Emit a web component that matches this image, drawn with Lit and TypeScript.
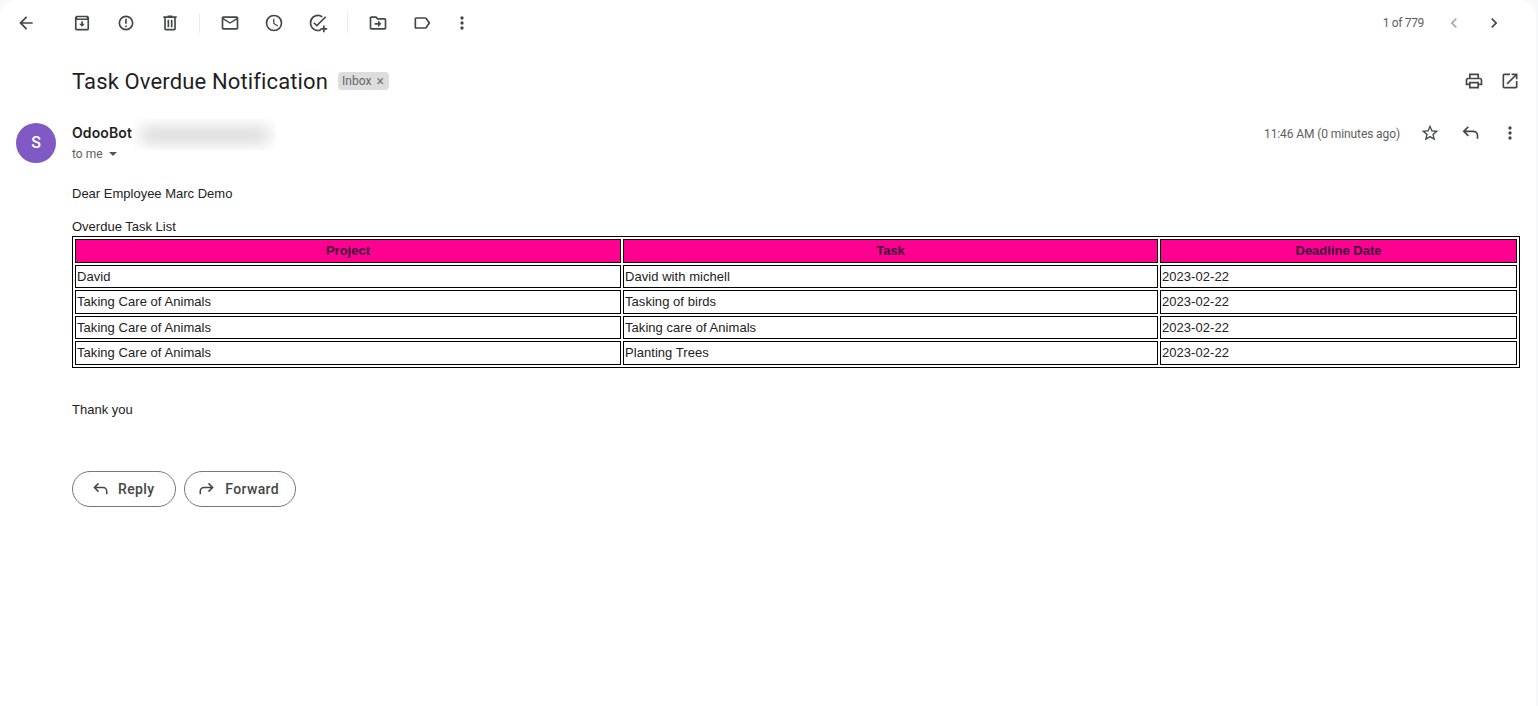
import { LitElement, html, css } from "lit";
import { customElement } from "lit/decorators.js";

const P: Record<string, string> = {
  back: "M20 11H7.83l5.59-5.59L12 4l-8 8 8 8 1.41-1.41L7.83 13H20v-2z",
  archive: "M5 3.2H19L20.5 5.5V19a2 2 0 0 1-2 2h-13a2 2 0 0 1-2-2V5.5ZM5.5 8.5V19h13V8.5H5.5zM6 6.7h12l-.7-1.5H6.7L6 6.7zM11 10h2v3h2.5L12 16.5 8.5 13H11v-3z",
  spam: "M12 3a9 9 0 1 0 0 18 9 9 0 0 0 0-18zm0 16a7 7 0 1 1 0-14 7 7 0 0 1 0 14zM11 7h2v6h-2V7zm0 8h2v2h-2v-2z",
  trash: "M15 4V3H9v1H4v2h1v13c0 1.1.9 2 2 2h10c1.1 0 2-.9 2-2V6h1V4h-5zm2 15H7V6h10v13zM9 8h2v9H9V8zm4 0h2v9h-2V8z",
  mail: "M20 4H4c-1.1 0-2 .9-2 2v12c0 1.1.9 2 2 2h16c1.1 0 2-.9 2-2V6c0-1.1-.9-2-2-2zm0 14H4V8l8 5 8-5v10zm-8-7L4 6h16l-8 5z",
  clock: "M12 2a10 10 0 1 0 0 20 10 10 0 0 0 0-20zm0 18a8 8 0 1 1 0-16 8 8 0 0 1 0 16zm.5-13H11v6l5.2 3.2.8-1.3-4.5-2.7V7z",
  task: "M22 5.18 10.59 16.6l-4.24-4.24 1.41-1.41 2.83 2.83 10-10L22 5.18zM12 20a8 8 0 0 1 0-16c1.57 0 3.04.46 4.28 1.25l1.45-1.45A10 10 0 0 0 2 12a10 10 0 0 0 13.5 9.36v-2.14c-1.1.5-2.28.78-3.5.78zM20 15h-2v3h-3v2h3v3h2v-3h3v-2h-3v-3z",
  move: "M20 6h-8l-2-2H4c-1.1 0-2 .9-2 2v12c0 1.1.9 2 2 2h16c1.1 0 2-.9 2-2V8c0-1.1-.9-2-2-2zm0 12H4V6h5.17l2 2H20v10zm-8-1 4-4-4-4v3H8v2h4v3z",
  label: "M17.63 5.84C17.27 5.33 16.67 5 16 5L5 5.01C3.9 5.01 3 5.9 3 7v10c0 1.1.9 1.99 2 1.99L16 19c.67 0 1.27-.33 1.63-.84L22 12l-4.37-6.16zM16 17H5V7h11l3.55 5L16 17z",
  more: "M12 8a2 2 0 1 0 0-4 2 2 0 0 0 0 4zm0 2a2 2 0 1 0 0 4 2 2 0 0 0 0-4zm0 6a2 2 0 1 0 0 4 2 2 0 0 0 0-4z",
  prev: "M15.41 7.41 14 6l-6 6 6 6 1.41-1.41L10.83 12z",
  next: "M8.59 16.59 10 18l6-6-6-6-1.41 1.41L13.17 12z",
  print: "M19 8h-1V3H6v5H5c-1.66 0-3 1.34-3 3v6h4v4h12v-4h4v-6c0-1.66-1.34-3-3-3zM8 5h8v3H8V5zm8 14H8v-4h8v4zm2-4v-2H6v2H4v-4c0-.55.45-1 1-1h14c.55 0 1 .45 1 1v4h-2z",
  open: "M19 19H5V5h7V3H5a2 2 0 0 0-2 2v14a2 2 0 0 0 2 2h14c1.1 0 2-.9 2-2v-7h-2v7zM14 3v2h3.59l-9.83 9.83 1.41 1.41L19 6.41V10h2V3h-7z",
  star: "M22 9.24l-7.19-.62L12 2 9.19 8.63 2 9.24l5.46 4.73L5.82 21 12 17.27 18.18 21l-1.63-7.03L22 9.24zM12 15.4l-3.76 2.27 1-4.28-3.32-2.88 4.38-.38L12 6.1l1.71 4.04 4.38.38-3.32 2.88 1 4.28L12 15.4z",
  replyLine: "M21 19v-4a5 5 0 0 0-5-5H5.5M10 4.5 4.5 10l5.5 5.5",
  fwdLine: "M3 19v-4a5 5 0 0 1 5-5h10.5M14 4.5 19.5 10 14 15.5",
};

const icon = (name: string, size = 20, color = "#444746") =>
  html`<svg class="ic" width=${size} height=${size} viewBox="0 0 24 24" fill=${color}><path d=${P[name]}></path></svg>`;
const line = (name: string, size = 20, color = "#444746") =>
  html`<svg class="ic" width=${size} height=${size} viewBox="0 0 24 24" fill="none" stroke=${color} stroke-width="2"><path d=${P[name]}></path></svg>`;

const ROWS = [
  ["David", "David with michell"],
  ["Taking Care of Animals", "Tasking of birds"],
  ["Taking Care of Animals", "Taking care of Animals"],
  ["Taking Care of Animals", "Planting Trees"],
];

@customElement("app-root")
export class AppRoot extends LitElement {
  static styles = css`
    :host { display: block; height: 706px; background: #f6f8fc; overflow: hidden; font-family: Roboto, "Liberation Sans", sans-serif; }
    .card { width: 1536px; height: 706px; background: #fff; border-radius: 16px 16px 0 0; }
    .ic { display: block; flex: none; }
    .toolbar { height: 46px; display: flex; align-items: center; padding-left: 16px; }
    .tb { width: 44px; height: 20px; display: flex; align-items: center; justify-content: center; flex: none; }
    .tb.first { width: 20px; margin-right: 24px; }
    .tb.last { margin-left: -4px; }
    .sep { width: 1px; height: 20px; background: #ececec; flex: none; margin: 0 8px 0 7px; }
    .pager { margin-left: auto; display: flex; align-items: center; font-size: 12px; letter-spacing: -0.35px; color: #5e5e5e; }
    .pager .count { margin-right: 10px; }
    .pager .tb { width: 40px; }
    .pager .tb:last-child { margin-right: 22px; }
    .subject { display: flex; align-items: center; height: 28px; margin-top: 21px; padding: 0 16px 0 72px; }
    h1 { margin: 2px 0 0; font: 400 22px/28px Roboto, sans-serif; letter-spacing: 0.14px; color: #1f1f1f; }
    .chip { margin-left: 10px; height: 18px; padding: 0 5px 0 4px; border-radius: 4px; background: #dddddd; color: #666; font-size: 12px; display: flex; align-items: center; gap: 5px; }
    .chip span { font-size: 14px; color: #777; line-height: 1; }
    .subject .right { margin-left: auto; display: flex; gap: 16px; }
    .head { display: flex; margin-top: 28px; padding-left: 16px; height: 48px; }
    .avatar { width: 40px; height: 40px; border-radius: 50%; background: #8159c4; color: #fff; font: 500 16px/40px Roboto, sans-serif; text-align: center; flex: none; }
    .who { margin-left: 16px; position: relative; flex: none; }
    .name { font: 600 14px/20px Inter, Roboto, sans-serif; letter-spacing: 0.1px; color: #1f1f1f; }
    .to { font-size: 12px; line-height: 20px; margin-top: 1px; color: #5e5e5e; display: flex; align-items: center; gap: 6px; }
    .caret { width: 0; height: 0; border: 4.5px solid transparent; border-top: 4.5px solid #555; border-bottom: 0; }
    .mask { position: absolute; left: 63px; top: -4px; width: 141px; height: 31px; overflow: hidden; }
    .blur { position: absolute; left: 6px; top: 9px; width: 128px; height: 14px; background: #d2d2d2; filter: blur(8px); }
    .meta { margin-left: auto; display: flex; align-items: flex-start; }
    .time { font-size: 12px; line-height: 20px; margin-top: 1px; color: #5e5e5e; margin-right: 20px; letter-spacing: -0.1px; }
    .meta .acts { display: flex; gap: 20px; margin-right: 16px; }
    .body { margin-top: 15px; padding-left: 72px; width: 1448px; font: 13px/15px "Liberation Sans", Arial, sans-serif; color: #222; }
    .dear { height: 15px; margin-bottom: 18px; }
    .list { margin-bottom: 2px; }
    table { width: 100%; border: 1px solid #000; border-spacing: 2px; border-collapse: separate; table-layout: fixed; color: #222; font-size: 13px; }
    th, td { border: 1px solid #000; padding: 1px; text-align: left; font-weight: 400; line-height: 15px; height: 23.5px; box-sizing: border-box; }
    td { letter-spacing: 0.05px; }
    th { background: #ff0090; text-align: center; font-weight: 700; color: #3a0a3a; }
    col.a { width: 546px; } col.b { width: 535px; }
    .thanks { margin-top: 34px; }
    .actions { display: flex; gap: 8px; margin: 54px 0 0 72px; }
    .btn { height: 36px; box-sizing: border-box; border: 1px solid #747775; border-radius: 18px; display: flex; align-items: center; background: #fff; color: #444746; font: 500 14px Roboto, sans-serif; letter-spacing: 0.35px; gap: 9px; }
    .btn.r { padding: 0 21px 0 18px; }
    .btn.f { padding: 0 16px 0 13px; }
  `;

  render() {
    return html`<div class="card">
      <div class="toolbar">
        <div class="tb first">${icon("back")}</div>
        <div class="tb">${icon("archive")}</div>
        <div class="tb">${icon("spam")}</div>
        <div class="tb">${icon("trash")}</div>
        <div class="sep"></div>
        <div class="tb">${icon("mail")}</div>
        <div class="tb">${icon("clock")}</div>
        <div class="tb">${icon("task")}</div>
        <div class="sep"></div>
        <div class="tb">${icon("move")}</div>
        <div class="tb">${icon("label")}</div>
        <div class="tb last">${icon("more")}</div>
        <div class="pager">
          <span class="count">1 of 779</span>
          <div class="tb">${icon("prev", 20, "#a8a8a8")}</div>
          <div class="tb">${icon("next")}</div>
        </div>
      </div>
      <div class="subject">
        <h1>Task Overdue Notification</h1>
        <div class="chip">Inbox <span>×</span></div>
        <div class="right">${icon("print")}${icon("open")}</div>
      </div>
      <div class="head">
        <div class="avatar">S</div>
        <div class="who">
          <div class="name">OdooBot</div>
          <div class="to">to me <i class="caret"></i></div>
          <div class="mask"><div class="blur"></div></div>
        </div>
        <div class="meta">
          <div class="time">11:46 AM (0 minutes ago)</div>
          <div class="acts">${icon("star")}${line("replyLine")}${icon("more")}</div>
        </div>
      </div>
      <div class="body">
        <div class="dear">Dear Employee Marc Demo</div>
        <div class="list">Overdue Task List</div>
        <table>
          <colgroup><col class="a" /><col class="b" /><col /></colgroup>
          <thead><tr><th>Project</th><th>Task</th><th>Deadline Date</th></tr></thead>
          <tbody>
            ${ROWS.map((r) => html`<tr><td>${r[0]}</td><td>${r[1]}</td><td>2023-02-22</td></tr>`)}
          </tbody>
        </table>
        <div class="thanks">Thank you</div>
      </div>
      <div class="actions">
        <div class="btn r">${line("replyLine", 18)}Reply</div>
        <div class="btn f">${line("fwdLine", 18)}Forward</div>
      </div>
    </div>`;
  }
}
